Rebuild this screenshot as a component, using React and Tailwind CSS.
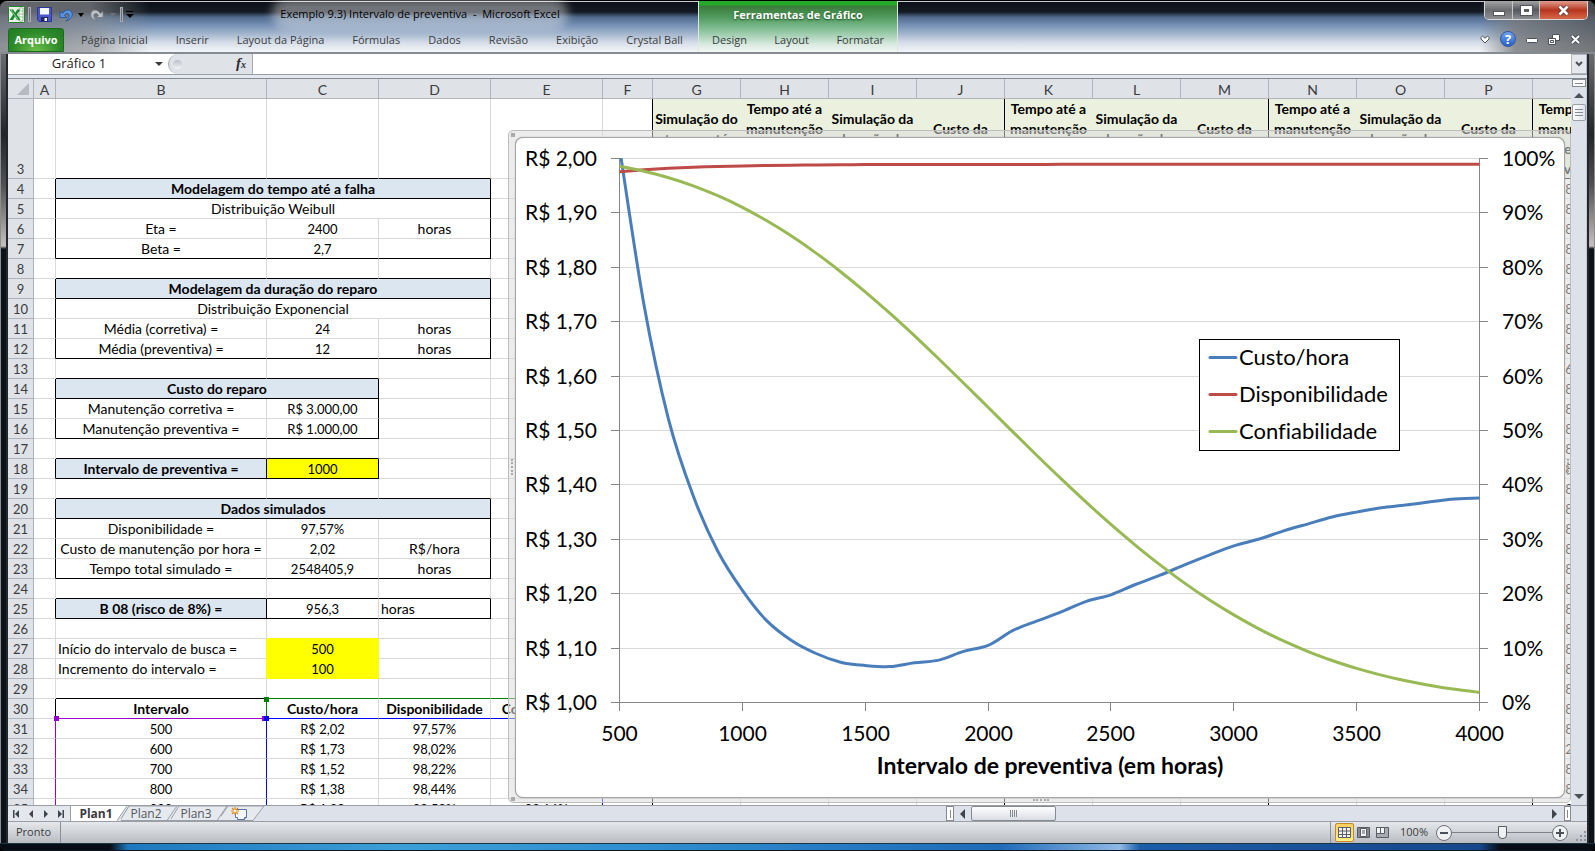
import { useState } from "react";

const TABS = [
  "Página Inicial",
  "Inserir",
  "Layout da Página",
  "Fórmulas",
  "Dados",
  "Revisão",
  "Exibição",
  "Crystal Ball",
];

const COLUMNS = [
  ["A", "w-[22px]"],
  ["B", "w-[211px]"],
  ["C", "w-[112px]"],
  ["D", "w-[112px]"],
  ["E", "w-[112px]"],
  ["F", "w-[50px]"],
  ["G", "w-[88px]"],
  ["H", "w-[88px]"],
  ["I", "w-[88px]"],
  ["J", "w-[88px]"],
  ["K", "w-[88px]"],
  ["L", "w-[88px]"],
  ["M", "w-[88px]"],
  ["N", "w-[88px]"],
  ["O", "w-[88px]"],
  ["P", "w-[88px]"],
  ["Q", "w-[88px]"],
];

const R = "border-r-black";
const B = "border-b-black";
const HEAD = "bg-[#dce6f1] font-bold";
const YELLOW = "bg-[#ffff00]";

// row -> { column: [text, classes, colSpan] }
const CELLS = {
  3: { B: ["", B], C: ["", B], D: ["", B] },
  4: { A: ["", R], B: ["Modelagem do tempo até a falha", `${HEAD} ${R} ${B}`, 3] },
  5: { A: ["", R], B: ["Distribuição Weibull", R, 3] },
  6: { A: ["", R], B: ["Eta ="], C: ["2400"], D: ["horas", R] },
  7: { A: ["", R], B: ["Beta =", B], C: ["2,7", B], D: ["", `${R} ${B}`] },
  8: { B: ["", B], C: ["", B], D: ["", B] },
  9: { A: ["", R], B: ["Modelagem da duração do reparo", `${HEAD} ${R} ${B}`, 3] },
  10: { A: ["", R], B: ["Distribuição Exponencial", R, 3] },
  11: { A: ["", R], B: ["Média (corretiva) ="], C: ["24"], D: ["horas", R] },
  12: { A: ["", R], B: ["Média (preventiva) =", B], C: ["12", B], D: ["horas", `${R} ${B}`] },
  13: { B: ["", B], C: ["", B] },
  14: { A: ["", R], B: ["Custo do reparo", `${HEAD} ${R} ${B}`, 2] },
  15: { A: ["", R], B: ["Manutenção corretiva ="], C: ["R$ 3.000,00", R] },
  16: { A: ["", R], B: ["Manutenção preventiva =", B], C: ["R$ 1.000,00", `${R} ${B}`] },
  17: { B: ["", B], C: ["", B] },
  18: {
    A: ["", R],
    B: ["Intervalo de preventiva =", `${HEAD} ${R} ${B}`],
    C: ["1000", `${YELLOW} ${R} ${B}`],
  },
  19: { B: ["", B], C: ["", B], D: ["", B] },
  20: { A: ["", R], B: ["Dados simulados", `${HEAD} ${R} ${B}`, 3] },
  21: { A: ["", R], B: ["Disponibilidade ="], C: ["97,57%"], D: ["", R] },
  22: { A: ["", R], B: ["Custo de manutenção por hora ="], C: ["2,02"], D: ["R$/hora", R] },
  23: { A: ["", R], B: ["Tempo total simulado =", B], C: ["2548405,9", B], D: ["horas", `${R} ${B}`] },
  24: { B: ["", B], C: ["", B], D: ["", B] },
  25: {
    A: ["", R],
    B: ["B 08 (risco de 8%) =", `${HEAD} ${R} ${B}`],
    C: ["956,3", B],
    D: ["horas", `text-left pl-[2px] ${R} ${B}`],
  },
  26: { C: ["", "border-b-[#ffff00]"] },
  27: {
    B: ["Início do intervalo de busca =", "text-left pl-[2px] border-r-[#ffff00]"],
    C: ["500", `${YELLOW} border-[#ffff00]`],
  },
  28: {
    B: ["Incremento do intervalo =", "text-left pl-[2px] border-r-[#ffff00]"],
    C: ["100", `${YELLOW} border-[#ffff00]`],
  },
  29: {
    B: ["", B],
    C: ["", "border-b-[#008000]"],
    D: ["", "border-b-[#008000]"],
    E: ["", "border-b-[#008000]"],
  },
  30: {
    A: ["", R],
    B: ["Intervalo", "font-bold border-r-[#008000] border-b-[#9900cc]"],
    C: ["Custo/hora", "font-bold border-b-[#0000ff]"],
    D: ["Disponibilidade", "font-bold border-b-[#0000ff]"],
    E: ["Confiabilidade", "font-bold border-b-[#0000ff]"],
  },
};

const RESULTS = [
  ["500", "R$ 2,02", "97,57%", "98,55%"],
  ["600", "R$ 1,73", "98,02%", "97,66%"],
  ["700", "R$ 1,52", "98,22%", "96,47%"],
  ["800", "R$ 1,38", "98,44%", "94,98%"],
  ["900", "R$ 1,28", "98,53%", "93,16%"],
];

RESULTS.forEach(([t, cost, avail, rel], i) => {
  CELLS[31 + i] = {
    A: ["", "border-r-[#9900cc]"],
    B: [t, "border-r-[#0000ff]"],
    C: [cost],
    D: [avail],
    E: [rel, "border-r-[#0000ff]"],
  };
});

const SIM_HEADERS = {
  G: ["Simulação do", "tempo até", "a falha"],
  H: ["Tempo até a", "manutenção", "corretiva ou", "preventiva"],
  I: ["Simulação da", "duração do", "reparo"],
  J: ["Custo da", "falha"],
  K: ["Tempo até a", "manutenção", "corretiva ou", "preventiva"],
  L: ["Simulação da", "duração do", "reparo"],
  M: ["Custo da", "falha"],
  N: ["Tempo até a", "manutenção", "corretiva ou", "preventiva"],
  O: ["Simulação da", "duração do", "reparo"],
  P: ["Custo da", "falha"],
  Q: ["Tempo até a", "manutenção", "corretiva ou", "preventiva"],
};

const BLOCK_ENDS = ["F", "J", "M", "P"];
const ROWS = Array.from({ length: 33 }, (_, i) => i + 3);

// chart series, one point for every 100 hours from 500 to 4000
const COST = [
  2.02, 1.73, 1.52, 1.38, 1.278, 1.206, 1.15, 1.114, 1.09, 1.074, 1.068, 1.066, 1.073, 1.078, 1.094, 1.105,
  1.132, 1.15, 1.167, 1.186, 1.198, 1.217, 1.234, 1.253, 1.271, 1.288, 1.3, 1.315, 1.328, 1.341, 1.35, 1.358,
  1.363, 1.369, 1.374, 1.376,
];
const AVAILABILITY = COST.map((_, i) => 0.9893 - 0.0136 * Math.exp(-i / 3.2));
const RELIABILITY = COST.map((_, i) => Math.exp(-Math.pow((500 + i * 100) / 2400, 2.7)));

const PLOT = { left: 104.5, right: 964.5, top: 21.5, bottom: 565.5 };

const smoothPath = (values) => {
  const step = (PLOT.right - PLOT.left) / (values.length - 1);
  const pts = values.map((v, i) => [PLOT.left + i * step, PLOT.bottom - v * (PLOT.bottom - PLOT.top)]);
  let d = `M${pts[0][0]} ${pts[0][1].toFixed(1)}`;
  for (let i = 0; i < pts.length - 1; i++) {
    const p0 = pts[i - 1] || pts[i];
    const p1 = pts[i];
    const p2 = pts[i + 1];
    const p3 = pts[i + 2] || p2;
    const c = [
      p1[0] + (p2[0] - p0[0]) / 6,
      p1[1] + (p2[1] - p0[1]) / 6,
      p2[0] - (p3[0] - p1[0]) / 6,
      p2[1] - (p3[1] - p1[1]) / 6,
      p2[0],
      p2[1],
    ].map((n) => n.toFixed(1));
    d += ` C${c.join(" ")}`;
  }
  return d;
};

const SERIES = [
  { name: "Custo/hora", color: "#4a7ebb", values: COST.map((v) => v - 1) },
  { name: "Disponibilidade", color: "#be4b48", values: AVAILABILITY },
  { name: "Confiabilidade", color: "#98b954", values: RELIABILITY },
];

const Chart = () => {
  const grid = Array.from({ length: 11 }, (_, i) => i);
  const y = (i) => Math.round(PLOT.bottom - i * 54.4 - 0.5) + 0.5;
  const x = (i) => Math.round(PLOT.left + (i * 860) / 7 - 0.5) + 0.5;
  return (
    <svg viewBox="1 1 1048 659" className="block w-full h-full font-[Lato,sans-serif] text-[21px]">
      <clipPath id="plot">
        <rect x="104" y="21" width="861" height="545" />
      </clipPath>
      {grid.slice(1).map((i) => (
        <path key={i} d={`M105 ${y(i)}H964`} stroke="#d9d9d9" />
      ))}
      <g stroke="#868686" fill="none">
        <path d="M104.5 21V574M964.5 21V574M96 565.5H973" />
        {grid.map((i) => (
          <path key={i} d={`M96 ${y(i)}H104M965 ${y(i)}H973`} />
        ))}
        {grid.slice(1, 7).map((i) => (
          <path key={i} d={`M${x(i)} 566V574`} />
        ))}
      </g>
      <g clipPath="url(#plot)" fill="none" strokeWidth="3" strokeLinejoin="round">
        {SERIES.map((s) => (
          <path key={s.name} d={smoothPath(s.values)} stroke={s.color} />
        ))}
      </g>
      {grid.map((i) => (
        <g key={i}>
          <text x="82" y={y(i) + 7} textAnchor="end">
            R$ {i === 10 ? "2,00" : `1,${i}0`}
          </text>
          <text x="987" y={y(i) + 7}>
            {i * 10}%
          </text>
        </g>
      ))}
      {grid.slice(0, 8).map((i) => (
        <text key={i} x={x(i)} y="604" textAnchor="middle">
          {500 + i * 500}
        </text>
      ))}
      <text x="535" y="637" textAnchor="middle" fontWeight="bold" className="text-[23px]">
        Intervalo de preventiva (em horas)
      </text>
      <rect x="684.5" y="202.5" width="200" height="111" fill="#fff" stroke="#000" />
      {SERIES.map((s, i) => (
        <g key={s.name} className="text-[22px]">
          <path d={`M695 ${220.5 + i * 37}h26`} stroke={s.color} strokeWidth="3" strokeLinecap="round" />
          <text x="724" y={228 + i * 37}>
            {s.name}
          </text>
        </g>
      ))}
    </svg>
  );
};

const Handle = ({ className }) => <span className={`absolute z-10 size-[5px] ${className}`} />;

// figures are set a size smaller than words
const isFigure = (text) => /^(R\$ )?[\d.,]+%?$/.test(text);

const Row = ({ n }) => {
  const cells = CELLS[n] || {};
  let skip = 0;
  return (
    <tr className={n === 3 ? "h-[80px]" : "h-[20px]"}>
      <th className="bg-[#dfe2e7] border-r border-b border-[#b1b5bb] font-normal text-[#3a3c40] align-bottom pt-[2px] leading-[17px]">
        {n}
      </th>
      {COLUMNS.map(([col]) => {
        if (skip > 0) {
          skip--;
          return null;
        }
        const [text = "", cls = "", span = 1] = cells[col] || [];
        skip = span - 1;
        const side = BLOCK_ENDS.includes(col) ? "border-r-black" : "";
        if (n === 3 && SIM_HEADERS[col]) {
          return (
            <td
              key={col}
              className={`border-r border-b border-[#ebf1de] border-b-black bg-[#ebf1de] text-center text-[14px] font-bold leading-[20px] whitespace-nowrap ${side}`}
            >
              <div className="h-[79px] flex flex-col justify-center">
                {SIM_HEADERS[col].map((line) => (
                  <div key={line}>{line}</div>
                ))}
              </div>
            </td>
          );
        }
        const sample = col === "Q" ? (n === 13 ? "680" : n === 32 ? "296" : "800") : text;
        const size = isFigure(sample) ? "text-[13px] pt-[2px]" : "text-[14px] py-px";
        return (
          <td
            key={col}
            colSpan={span}
            className={`relative border-r border-b border-[#d9d9d9] text-center leading-[17px] whitespace-nowrap ${size} ${side} ${cls}`}
          >
            {sample}
            {n === 30 && col === "B" && (
              <>
                <Handle className="-right-[3px] -top-[2px] bg-[#008000]" />
                <Handle className="-left-[2px] -bottom-[3px] bg-[#9900cc]" />
                <Handle className="-right-[1px] -bottom-[3px] bg-[#9900cc]" />
                <Handle className="-right-[3px] -bottom-[3px] bg-[#0000ff]" />
              </>
            )}
          </td>
        );
      })}
    </tr>
  );
};

const QuickAccess = () => (
  <div className="flex items-center h-[28px] w-[134px]">
    <button aria-label="Excel" className="w-[20px]">
      <svg viewBox="0 0 17 17" className="size-[17px]">
        <rect x=".5" y=".5" width="16" height="16" rx="1" fill="#e9f3e6" stroke="#2c7d34" />
        <path d="M11 2h4v13h-4z" fill="#fff" stroke="#6bb36b" strokeWidth=".7" />
        <path d="M11 5h4M11 8h4M11 11h4" stroke="#6bb36b" strokeWidth=".7" />
        <path d="M1.500 3.500h3.700l2 3.300 2-3.300h3.300L8.900 8.400l3.700 5.600H9L7 10.500 5 14H1.400l3.700-5.600z" fill="#1c8a35" />
        <path d="M3 4l7 9.500" stroke="#9fd39a" strokeWidth=".9" />
      </svg>
    </button>
    <span className="w-[3px] h-[15px] border border-[#a9acb1] bg-[#6d7076]" />
    <button aria-label="Salvar" className="ml-[6px] w-[22px]">
      <svg viewBox="0 0 15 15" className="size-[15px]">
        <path d="M.5.500h14v14H2l-1.500-1.500z" fill="#4a55c7" stroke="#2f3696" />
        <path d="M3 1h9v6.500H3z" fill="#f4f7ff" />
        <path d="M4 10h7v4.500H4z" fill="#20265f" />
        <path d="M7.500 11h2.500v3H7.500z" fill="#fff" />
      </svg>
    </button>
    <button aria-label="Desfazer" className="w-[27px] flex items-center gap-[5px]">
      <svg viewBox="0 0 14 14" className="size-[14px]">
        <path
          d="M1 3.500v6h6.500L5.400 7.300C7 4.800 10 5 10.200 7.500 10.300 9.500 9 11.200 7 13c4-1.200 6.300-3.500 6.200-6.700C13 1.500 7 .200 3.600 5.500z"
          fill="#5b95e3"
          stroke="#1d4f9f"
          strokeWidth=".8"
        />
      </svg>
      <span className="border-x-3 border-x-transparent border-t-4 border-t-black" />
    </button>
    <button aria-label="Refazer" className="ml-[4px] w-[28px] flex items-center gap-[6px]">
      <svg viewBox="0 0 14 14" className="size-[14px]">
        <path
          d="M13 3.500v6H6.500l2.100-2.200C7 4.800 4 5 3.800 7.500 3.700 9.500 5 11.200 7 13 3 11.800.700 9.500.800 6.300 1 1.500 7 .200 10.400 5.500z"
          fill="#bfc3c9"
          stroke="#74787f"
          strokeWidth=".8"
        />
      </svg>
      <span className="border-x-3 border-x-transparent border-t-4 border-t-[#6d7178]" />
    </button>
    <span className="w-[3px] h-[15px] border border-[#a9acb1] bg-[#6d7076] mx-[2px]" />
    <button aria-label="Personalizar" className="flex flex-col items-center gap-[2px] w-[9px]">
      <span className="w-[7px] h-px bg-black" />
      <span className="border-x-4 border-x-transparent border-t-4 border-t-black" />
    </button>
  </div>
);

const WindowButtons = () => (
  <div className="flex h-[19px] mr-[7px] rounded-b-[5px] border border-t-0 border-[#d6d8da] overflow-hidden">
    <button
      aria-label="Minimizar"
      className="w-[28px] border-r border-[#c5c8cb] bg-linear-to-b from-[#a4a4a6] via-[#6c6e71] via-50% to-[#8d8f92] flex items-center justify-center"
    >
      <span className="mt-[6px] w-[12px] h-[5px] bg-white border border-[#55585c]" />
    </button>
    <button
      aria-label="Restaurar"
      className="w-[27px] border-r border-[#c5c8cb] bg-linear-to-b from-[#a4a4a6] via-[#55585c] via-50% to-[#8d8f92] flex items-center justify-center"
    >
      <span className="w-[11px] h-[9px] border-3 border-white outline outline-[#55585c]" />
    </button>
    <button
      aria-label="Fechar"
      className="w-[47px] bg-linear-to-b from-[#dd9c8d] via-[#b6341c] via-50% to-[#d8674a] flex items-center justify-center"
    >
      <svg viewBox="0 0 13 11" className="w-[13px] h-[11px]">
        <path d="M2.500 1.500l8 8M10.500 1.500l-8 8" stroke="#4a3a3a" strokeWidth="4.400" />
        <path d="M2.500 1.500l8 8M10.500 1.500l-8 8" stroke="#fff" strokeWidth="2.600" />
      </svg>
    </button>
  </div>
);

const RibbonButtons = () => (
  <div className="flex items-center h-[24px] mr-[14px] gap-[10px]">
    <button aria-label="Minimizar faixa">
      <svg viewBox="0 0 10 9" className="w-[10px] h-[9px]" fill="#fff" stroke="#4c5057">
        <path d="M1 2.500L2.500 1 5 3.200 7.500 1 9 2.500v1.500L5 8 1 4z" />
      </svg>
    </button>
    <button
      aria-label="Ajuda"
      className="size-[16px] rounded-full bg-linear-to-b from-[#6fa3ea] to-[#2c5fc4] border border-[#2a57ad] text-white font-bold text-[13px] leading-[14px]"
    >
      ?
    </button>
    <button aria-label="Minimizar pasta">
      <svg viewBox="0 0 12 11" className="w-[12px] h-[11px]" fill="#fff" stroke="#4c5057">
        <rect x=".5" y="4.500" width="11" height="4" rx="1" />
      </svg>
    </button>
    <button aria-label="Restaurar pasta">
      <svg viewBox="0 0 12 11" className="w-[12px] h-[11px]" fill="#fff" stroke="#4c5057">
        <path d="M4.500.500h7v6h-7z" />
        <path d="M.5 4.500h7v6h-7z" />
        <path d="M2.500 6.500h3v2h-3z" />
      </svg>
    </button>
    <button aria-label="Fechar pasta">
      <svg viewBox="0 0 11 9" className="w-[11px] h-[9px]">
        <path d="M2 1l7 7M9 1L2 8" stroke="#4c5057" strokeWidth="4" />
        <path d="M2 1l7 7M9 1L2 8" stroke="#fff" strokeWidth="2" />
      </svg>
    </button>
  </div>
);

const NavArrow = ({ label, d }) => (
  <button aria-label={label} className="w-[15px] flex justify-center">
    <svg viewBox="0 0 8 8" className="size-[8px]" fill="#3f444c">
      <path d={d} />
    </svg>
  </button>
);

const SheetTab = ({ name, active, onClick }) => (
  <button onClick={onClick} className="relative w-[50px] h-[15px] text-[12px] leading-[15px]">
    <svg viewBox="0 0 56 15" className="absolute left-0 top-0 w-[56px] h-[15px]" stroke="#9a9fa7">
      <path
        d={active ? "M0 0H56L46 14.500H0Z" : "M8 0H60L50 14.500H-1Z"}
        fill={active ? "#fff" : "#e6e9ee"}
        stroke={active ? "#fff" : "#9a9fa7"}
      />
      <path d="M56 0L46 14.500" fill="none" />
    </svg>
    <span className={`relative ${active ? "font-bold text-[#3a3c40]" : "text-[#55585e]"}`}>{name}</span>
  </button>
);

const ViewIcon = ({ label, active, children }) => (
  <button
    aria-label={label}
    className={`w-[19px] h-[19px] flex items-center justify-center rounded-[2px] ${
      active ? "border border-[#c28a30] bg-linear-to-b from-[#fbd060] to-[#fff08a]" : ""
    }`}
  >
    <svg viewBox="0 0 13 11" className="w-[13px] h-[11px] shrink-0" fill="#f4f5f6" stroke="#5a5d63">
      {children}
    </svg>
  </button>
);

const App = () => {
  const [sheet, setSheet] = useState("Plan1");
  const [zoom, setZoom] = useState(50);
  const [formula, setFormula] = useState("");
  const [nameBox, setNameBox] = useState("Gráfico 1");

  return (
    <div className="h-screen flex flex-col overflow-hidden bg-black font-['Open_Sans',sans-serif] text-[11px] text-[#3a3c40]">
      {/* Title bar and ribbon tabs */}
      <header className="flex h-[54px] shrink-0 border-t border-black rounded-t-[7px] border-b-2 border-b-[#868b93] bg-[linear-gradient(90deg,#77797ccc_0,#8a8d91aa_90px,transparent_150px,transparent_calc(100%-115px),#77797ccc_calc(100%-80px),#55575acc_100%),linear-gradient(180deg,#c9ccd0_0,#c9ccd0_1px,#0c1018_1px,#141a24_11px,#50698b_16px,#7590b4_24px,#a9bad0_34px,#d8dfe9_42px,#f0f3f7_50px)]">
        <div className="w-[698px] pl-[8px] shrink-0">
          <div className="flex items-center h-[27px]">
            <QuickAccess />
            <h1 className="flex-1 text-center text-black whitespace-pre">
              <span className="rounded-full bg-white/40 shadow-[0_0_10px_8px_rgba(255,255,255,0.4)]">
                Exemplo 9.3) Intervalo de preventiva{"  -  "}Microsoft Excel
              </span>
            </h1>
          </div>
          <nav className="flex h-[24px] leading-[22px] whitespace-nowrap">
            <button className="w-[56px] rounded-t-[3px] border border-[#1d6a1b] bg-[radial-gradient(ellipse_at_bottom,#6cc04a,#2e8b2a_60%,#1f7a22)] text-white font-bold leading-[20px]">
              Arquivo
            </button>
            <div className="flex pl-[3px]">
              {TABS.map((t) => (
                <button key={t} className="px-[14px]">
                  {t}
                </button>
              ))}
            </div>
          </nav>
        </div>
        <div className="w-[200px] shrink-0 border-x border-[#dfe8df] bg-[linear-gradient(180deg,#25a92a_0,#25a92a_4px,#3a7a3a_5px,#4f9a5c_16px,#8ec4a0_30px,#dcebe2_44px,#f3f8f5_51px)]">
          <div className="h-[27px] leading-[28px] text-center text-white font-bold [text-shadow:0_1px_2px_#1c4a1f]">
            Ferramentas de Gráfico
          </div>
          <nav className="flex justify-between pl-[13px] pr-[13px] h-[24px] leading-[22px]">
            <button>Design</button>
            <button>Layout</button>
            <button>Formatar</button>
          </nav>
        </div>
        <div className="flex-1 flex flex-col items-end">
          <WindowButtons />
          <div className="pt-[7px]">
            <RibbonButtons />
          </div>
        </div>
      </header>

      <div className="flex flex-1 min-h-0">
        <div className="w-[8px] shrink-0 border-l border-r-2 border-l-[#8b8d90] border-r-[#23262b] bg-[linear-gradient(180deg,#6a6c6f_0,#232629_80px,#4d4f52_130px,#c6c0bc_192px,#0d1118_195px)]" />

        <div className="flex-1 min-w-0 flex flex-col bg-white">
          {/* Formula bar */}
          <div className="flex h-[21px] shrink-0 border-b border-[#9a9fa7] bg-white">
            <input
              aria-label="Caixa de nome"
              value={nameBox}
              onChange={(e) => setNameBox(e.target.value)}
              className="w-[142px] text-center text-[13px] text-[#1e2023] outline-none"
            />
            <button aria-label="Nomes" className="w-[18px] flex items-center justify-center">
              <span className="border-x-4 border-x-transparent border-t-4 border-t-[#3a3c40]" />
            </button>
            <div className="flex-1 flex min-w-0 bg-white">
              <div className="flex items-center justify-between w-[85px] rounded-l-full border-l border-r border-[#a3a7ad] bg-[#dfe2e7] pl-[4px] pr-[6px]">
                <span className="size-[9px] rounded-full bg-linear-to-b from-[#b9bdc3] to-[#f4f5f7]" />
                <button
                  aria-label="Inserir função"
                  className="font-['Liberation_Serif',serif] italic font-bold text-[15px] leading-[18px] text-[#2b2d31]"
                >
                  f<span className="text-[10px]">x</span>
                </button>
              </div>
              <input
                aria-label="Barra de fórmulas"
                value={formula}
                onChange={(e) => setFormula(e.target.value)}
                className="flex-1 min-w-0 px-1 outline-none"
              />
              <button
                aria-label="Expandir"
                className="w-[16px] border border-[#b1b5bb] bg-[#e4e7ec] flex items-center justify-center"
              >
                <svg viewBox="0 0 8 6" className="w-[8px] h-[6px]" fill="none" stroke="#4c5057" strokeWidth="2">
                  <path d="M1 1l3 3 3-3" />
                </svg>
              </button>
            </div>
          </div>
          <div className="h-[4px] shrink-0 bg-[#e4e8ef] border-b border-[#858a92]" />

          {/* Worksheet */}
          <div className="flex flex-1 min-h-0">
            <div className="relative flex-1 min-w-0 overflow-hidden bg-white font-[Lato,sans-serif] text-[13px] [font-variant-ligatures:none]">
              <table className="table-fixed border-separate border-spacing-0 w-[1613px] text-black">
                <colgroup>
                  <col className="w-[26px]" />
                  {COLUMNS.map(([c, w]) => (
                    <col key={c} className={w} />
                  ))}
                </colgroup>
                <thead>
                  <tr className="h-[20px] bg-[#dfe2e7] text-[#3a3c40]">
                    <th className="relative border-r border-b border-[#b1b5bb]">
                      <span className="absolute right-[4px] bottom-[3px] border-l-[12px] border-l-transparent border-b-[12px] border-b-[#b7bbc1]" />
                    </th>
                    {COLUMNS.map(([c]) => (
                      <th
                        key={c}
                        className="border-r border-b border-[#b1b5bb] font-normal text-[14px] pt-[2px] leading-[17px]"
                      >
                        {c}
                      </th>
                    ))}
                  </tr>
                </thead>
                <tbody>
                  {ROWS.map((n) => (
                    <Row key={n} n={n} />
                  ))}
                </tbody>
              </table>

              {/* Embedded chart */}
              <div className="absolute left-[500px] right-0 top-[51px] bottom-[2px] rounded-[5px] border border-[#bdbdbd] bg-[#dcdcdc]/55 pl-[6px] pr-[5px] pt-[6px] pb-[4px]">
                <div className="h-full rounded-[8px] border border-[#a6a6a6] bg-white shadow-[0_0_1px_#888]">
                  <Chart />
                </div>
                <span className="absolute left-[2px] top-[2px] w-[4px] h-[4px] border-2 border-dotted border-[#aaa]" />
                <span className="absolute left-[2px] bottom-[1px] w-[4px] h-[4px] border-2 border-dotted border-[#aaa]" />
                <span className="absolute left-[2px] top-[328px] h-[16px] border-l-2 border-dotted border-[#aaa]" />
                <span className="absolute right-[1px] top-[328px] h-[16px] border-l-2 border-dotted border-[#aaa]" />
                <span className="absolute left-[524px] bottom-[1px] w-[16px] border-t-2 border-dotted border-[#aaa]" />
              </div>
            </div>

            {/* Vertical scroll bar */}
            <div className="w-[16px] shrink-0 flex flex-col items-center bg-[#dde1e9] border-r border-[#c5c9d0]">
              <span className="w-[14px] h-[8px] border border-[#858a92] bg-white flex items-center justify-center">
                <span className="w-[8px] h-px bg-[#858a92]" />
              </span>
              <button aria-label="Rolar para cima" className="h-[17px] flex items-center">
                <span className="border-x-5 border-x-transparent border-b-5 border-b-[#4c5057]" />
              </button>
              <span className="w-[14px] h-[17px] rounded-[2px] border border-[#9a9fa7] bg-linear-to-r from-white to-[#dfe3ea] flex flex-col items-center justify-center gap-[2px]">
                <span className="w-[8px] h-px bg-[#858a92]" />
                <span className="w-[8px] h-px bg-[#858a92]" />
                <span className="w-[8px] h-px bg-[#858a92]" />
              </span>
              <span className="flex-1" />
              <button aria-label="Rolar para baixo" className="h-[17px] flex items-center">
                <span className="border-x-5 border-x-transparent border-t-5 border-t-[#4c5057]" />
              </button>
            </div>
          </div>

          {/* Sheet tabs and horizontal scroll bar */}
          <div className="flex h-[17px] shrink-0 border-y border-[#9a9fa7] bg-[#dde1e9]">
            <div className="w-[938px] flex overflow-hidden">
              <div className="flex items-center w-[63px] border-r border-[#9a9fa7] bg-[#e4e7ec]">
                <NavArrow label="Primeira planilha" d="M1 0h1.500v8H1zM7 0v8L3 4z" />
                <NavArrow label="Planilha anterior" d="M6 0v8L2 4z" />
                <NavArrow label="Próxima planilha" d="M2 0v8l4-4z" />
                <NavArrow label="Última planilha" d="M1 0v8l4-4zM5.500 0H7v8H5.500z" />
              </div>
              {["Plan1", "Plan2", "Plan3"].map((name) => (
                <SheetTab key={name} name={name} active={sheet === name} onClick={() => setSheet(name)} />
              ))}
              <button aria-label="Inserir planilha" className="relative w-[44px] h-[15px]">
                <svg viewBox="0 0 44 15" className="w-[44px] h-[15px]">
                  <path d="M7 0H43L32 14.500H-3Z" fill="#e6e9ee" stroke="#9a9fa7" />
                  <path d="M14.500 3.500h11v8h-2v2h-7v-2h-2z" fill="#f3f7fd" stroke="#5b76a5" />
                  <path d="M22 13.500l3.500-3.500v1.500l-2 2z" fill="#5b76a5" />
                  <path d="M14 1v8M10 5h8M11 2l6 6M17 2l-6 6" stroke="#d9861f" strokeWidth="1.200" />
                  <circle cx="14" cy="5" r="1.600" fill="#fff3c9" />
                </svg>
              </button>
            </div>
            <div className="flex-1 flex items-center">
              <span className="w-[8px] h-[15px] border border-[#858a92] bg-white flex items-center justify-center">
                <span className="w-px h-[8px] bg-[#858a92]" />
              </span>
              <button aria-label="Rolar para a esquerda" className="w-[17px] flex justify-center">
                <span className="border-y-5 border-y-transparent border-r-5 border-r-[#3f444c]" />
              </button>
              <span className="w-[85px] h-[15px] rounded-[2px] border border-[#858a92] bg-linear-to-b from-white to-[#d9dde5] flex items-center justify-center gap-px">
                <span className="w-px h-[7px] bg-[#858a92]" />
                <span className="w-px h-[7px] bg-[#858a92]" />
                <span className="w-px h-[7px] bg-[#858a92]" />
                <span className="w-px h-[7px] bg-[#858a92]" />
              </span>
              <span className="flex-1" />
              <button aria-label="Rolar para a direita" className="w-[17px] flex justify-center">
                <span className="border-y-5 border-y-transparent border-l-5 border-l-[#3f444c]" />
              </button>
              <span className="ml-px w-[7px] h-[15px] mr-[16px] border border-[#858a92] bg-white flex items-center justify-center">
                <span className="w-px h-[8px] bg-[#858a92]" />
              </span>
            </div>
          </div>

          {/* Status bar */}
          <footer className="flex items-center h-[21px] shrink-0 bg-linear-to-b from-[#e6e8eb] to-[#b9bdc2]">
            <span className="w-[53px] pl-[8px] h-full leading-[20px] border-r border-[#8b9097]">Pronto</span>
            <span className="flex-1" />
            <div className="flex items-center h-full border-l border-[#8b9097] pl-[4px]">
              <ViewIcon label="Normal" active>
                <path d="M.5.500h12v10H.5zM.5 4h12M.5 7.500h12M4.500.500v10M8.500.500v10" />
              </ViewIcon>
              <ViewIcon label="Layout da Página">
                <path d="M.5.500h12v10H.5z" fill="#85888e" />
                <path d="M3.500 1.500h6v8h-6zM5 4h3M5 6h3" />
              </ViewIcon>
              <ViewIcon label="Quebra de Página">
                <path d="M.5.500h12v10H.5z" fill="#a8abb0" />
                <path d="M.5.500h4v6h-4zM4.500.500h4v6h-4z" />
              </ViewIcon>
              <span className="w-[44px] text-center">100%</span>
              <button
                aria-label="Reduzir"
                className="size-[16px] rounded-full border border-[#6d7178] bg-[#f0f1f3] flex items-center justify-center"
              >
                <span className="w-[8px] h-[2px] bg-[#4c5057]" />
              </button>
              <input
                type="range"
                aria-label="Zoom"
                value={zoom}
                onChange={(e) => setZoom(e.target.value)}
                className="w-[100px] h-[14px] appearance-none bg-[linear-gradient(#7d8188,#7d8188)] bg-[length:100%_1px] bg-center bg-no-repeat [&::-webkit-slider-thumb]:appearance-none [&::-webkit-slider-thumb]:w-[9px] [&::-webkit-slider-thumb]:h-[13px] [&::-webkit-slider-thumb]:bg-[#f0f1f3] [&::-webkit-slider-thumb]:border [&::-webkit-slider-thumb]:border-[#5a5d63] [&::-webkit-slider-thumb]:rounded-b-[4px]"
              />
              <button
                aria-label="Ampliar"
                className="size-[16px] rounded-full border border-[#6d7178] bg-[#f0f1f3] flex items-center justify-center"
              >
                <svg viewBox="0 0 8 8" className="size-[8px]">
                  <path d="M4 0v8M0 4h8" stroke="#4c5057" strokeWidth="2" />
                </svg>
              </button>
              <svg viewBox="0 0 12 12" className="ml-[7px] mt-[7px] size-[12px]" fill="#8f949b">
                <path d="M9 1h2v2H9zM5 5h2v2H5zM9 5h2v2H9zM1 9h2v2H1zM5 9h2v2H5zM9 9h2v2H9z" />
              </svg>
            </div>
          </footer>
        </div>

        <div className="w-[8px] shrink-0 border-r border-l-2 border-r-[#8b8d90] border-l-[#23262b] bg-[linear-gradient(180deg,#6a6c6f_0,#232629_80px,#4d4f52_130px,#c6c0bc_192px,#0d1118_195px)]" />
      </div>

      {/* Lower window edge */}
      <div className="h-[8px] shrink-0 border-y border-t-[#1c3448] border-b-[#0c1420] rounded-b-[5px] bg-[linear-gradient(90deg,#080c14_110px,#1f78bd_128px,#3d9fd8_400px,#2f8fcf_640px,#1f6bb8_1000px,#8fb8e6_1120px,#1c5da8_1140px,#17478a_1480px,#080c14_1500px)]" />
    </div>
  );
};

export default App;
